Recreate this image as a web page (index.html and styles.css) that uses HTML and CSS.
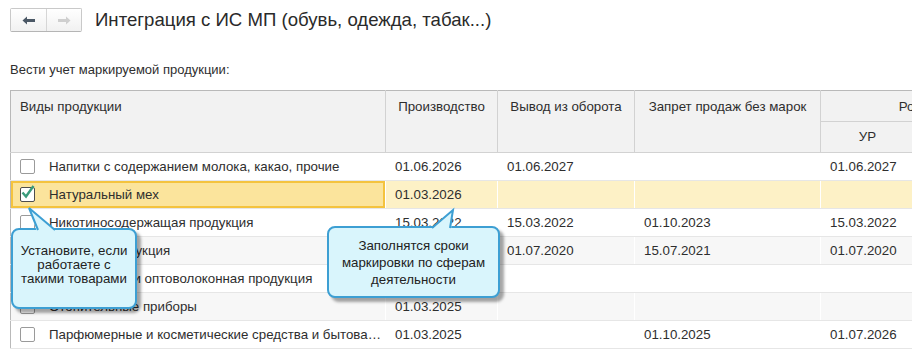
FILE: index.html
```html
<!DOCTYPE html>
<html lang="ru">
<head>
    <meta charset="UTF-8">
    <meta name="viewport" content="width=device-width, initial-scale=1.0">
    <title>Интеграция с ИС МП</title>
    <link rel="stylesheet" href="styles.css">
</head>
<body>
    <div class="toolbar">
        <div class="nav">
            <button class="nav-btn">
                <svg width="14" height="9" viewBox="0 0 14 9"><path d="M0.5 4.5 L5 0.5 L5 3 L13 3 L13 6 L5 6 L5 8.5 Z" fill="#4b5866"/></svg>
            </button>
            <button class="nav-btn" disabled>
                <svg width="14" height="9" viewBox="0 0 14 9"><path d="M13.5 4.5 L9 0.5 L9 3 L1 3 L1 6 L9 6 L9 8.5 Z" fill="#cfcfcf"/></svg>
            </button>
        </div>
        <h1>Интеграция с ИС МП (обувь, одежда, табак...)</h1>
    </div>

    <div class="caption">Вести учет маркируемой продукции:</div>

    <div class="grid-wrap">
        <table class="grid">
            <colgroup>
                <col style="width: 375px">
                <col style="width: 112px">
                <col style="width: 137px">
                <col style="width: 186px">
                <col style="width: 94px">
                <col style="width: 114px">
            </colgroup>
            <thead>
                <tr class="head-top">
                    <th rowspan="2" class="left">Виды продукции</th>
                    <th rowspan="2">Производство</th>
                    <th rowspan="2">Вывод из оборота</th>
                    <th rowspan="2">Запрет продаж без марок</th>
                    <th colspan="2">Розница</th>
                </tr>
                <tr class="head-sub">
                    <th class="sub">УР</th>
                    <th class="sub">ЕАЭС</th>
                </tr>
            </thead>
            <tbody>
                <tr>
                    <td class="name"><span class="check"></span>Напитки с содержанием молока, какао, прочие</td>
                    <td>01.06.2026</td>
                    <td>01.06.2027</td>
                    <td></td>
                    <td>01.06.2027</td>
                    <td></td>
                </tr>
                <tr class="selected">
                    <td class="name"><span class="check checked"><svg width="16" height="16" viewBox="0 0 16 16"><path d="M2.5 7.5 L6 11.5 L13.5 1" fill="none" stroke="#3a9b7b" stroke-width="2.4"/></svg></span>Натуральный мех</td>
                    <td>01.03.2026</td>
                    <td></td>
                    <td></td>
                    <td></td>
                    <td></td>
                </tr>
                <tr>
                    <td class="name"><span class="check"></span>Никотиносодержащая продукция</td>
                    <td>15.03.2022</td>
                    <td>15.03.2022</td>
                    <td>01.10.2023</td>
                    <td>15.03.2022</td>
                    <td></td>
                </tr>
                <tr>
                    <td class="name"><span class="check"></span>Обувная продукция</td>
                    <td>01.07.2020</td>
                    <td>01.07.2020</td>
                    <td>15.07.2021</td>
                    <td>01.07.2020</td>
                    <td></td>
                </tr>
                <tr>
                    <td class="name"><span class="check"></span>Оптоволокно и оптоволоконная продукция</td>
                    <td></td>
                    <td></td>
                    <td></td>
                    <td></td>
                    <td></td>
                </tr>
                <tr>
                    <td class="name"><span class="check"></span>Отопительные приборы</td>
                    <td>01.03.2025</td>
                    <td></td>
                    <td></td>
                    <td></td>
                    <td></td>
                </tr>
                <tr>
                    <td class="name"><span class="check"></span>Парфюмерные и косметические средства и бытовая химия</td>
                    <td>01.03.2025</td>
                    <td></td>
                    <td>01.10.2025</td>
                    <td>01.07.2026</td>
                    <td></td>
                </tr>
            </tbody>
        </table>

        <!-- подсказки поверх таблицы -->
        <div class="callout callout-left">
            <svg class="tail" width="50" height="26" viewBox="0 0 50 26"><polygon points="26,26 18,2 45,26" fill="#d9f5fc"/><polyline points="27,24 18,2 44,24" fill="none" stroke="#3d9fd3" stroke-width="2"/></svg>
            Установите, если<br>работаете с<br>такими товарами
        </div>
        <div class="callout callout-right">
            <svg class="tail" width="140" height="22" viewBox="0 0 140 22"><polygon points="104,22 126,2 124,22" fill="#d9f5fc"/><polyline points="105,20 126,2 123,20" fill="none" stroke="#3d9fd3" stroke-width="2"/></svg>
            Заполнятся сроки<br>маркировки по сферам<br>деятельности
        </div>
    </div>
</body>
</html>
```

FILE: styles.css
```css
body {
    margin: 0;
    font-family: "Liberation Sans", Arial, sans-serif;
    font-size: 13px;
    color: #2e2e2e;
    background: #fff;
    overflow: hidden;
}
.toolbar {
    display: flex;
    align-items: center;
    gap: 13px;
    padding: 8px 10px 0;
}
.nav {
    display: flex;
    border: 1px solid #c9c9c9;
    border-bottom-color: #b5b5b5;
    border-radius: 2px;
}
.nav-btn {
    width: 35px;
    height: 22px;
    padding: 0;
    border: none;
    background: linear-gradient(#ffffff, #f1f1f1);
    display: flex;
    align-items: center;
    justify-content: center;
}
.nav-btn + .nav-btn {
    border-left: 1px solid #d6d6d6;
}
h1 {
    margin: 0;
    font-size: 18.6px;
    font-weight: normal;
    color: #2a2a2a;
}
.caption {
    padding: 30px 10px 0;
    line-height: 16px;
}
.grid-wrap {
    position: relative;
    margin: 12px 0 0 10px;
    width: 902px;
    overflow: hidden;
}
.grid {
    border-collapse: collapse;
    table-layout: fixed;
    width: 1018px;
    font-size: 13.3px;
}
.grid th {
    background: #f2f2f2;
    font-weight: normal;
    text-align: center;
    vertical-align: top;
    padding: 8px 8px 0;
    line-height: 16px;
    border: 1px solid #d2d2d2;
    white-space: nowrap;
}
.grid th.left {
    text-align: left;
    padding-left: 9px;
}
.grid th.sub {
    vertical-align: middle;
    padding-top: 0;
}
.grid thead tr.head-top {
    height: 31px;
}
.grid thead tr.head-sub {
    height: 31px;
}
.grid thead tr:first-child th {
    border-top-color: #b9b9b9;
}
.grid th:first-child,
.grid td:first-child {
    border-left: 1px solid #b9b9b9;
}
.grid tbody tr {
    height: 28px;
}
.grid td {
    padding: 0 9px;
    border-top: 1px solid #e6e6e6;
    border-bottom: 1px solid #e6e6e6;
    border-left: 1px solid #fff;
    white-space: nowrap;
    overflow: hidden;
    text-overflow: ellipsis;
}
.grid tbody tr:nth-child(even) td {
    background: #f7f7f7;
}
.grid tbody tr.selected td {
    background: #fdf1c6;
}
.grid tbody tr.selected td.name {
    background: #fbe49c;
    box-shadow: inset 0 0 0 2px #f4c33e;
}
.grid td.name {
    padding-left: 9px;
    padding-right: 4px;
}
.check {
    display: inline-block;
    position: relative;
    width: 13px;
    height: 13px;
    border: 1px solid #9a9a9a;
    border-radius: 2px;
    background: #fff;
    vertical-align: -3px;
    margin-right: 14px;
}
.check.checked {
    border-color: #4d4d4d;
}
.check svg {
    position: absolute;
    left: -1px;
    top: -3px;
}
.callout {
    position: absolute;
    box-sizing: border-box;
    background: #d9f5fc;
    border: 2px solid #3d9fd3;
    border-radius: 8px;
    box-shadow: 4px 4px 3px rgba(0, 0, 0, 0.35);
    text-align: center;
    color: #222;
    font-size: 13.3px;
    display: flex;
    align-items: center;
    justify-content: center;
}
.callout .tail {
    position: absolute;
    left: -2px;
    overflow: visible;
}
.callout-left {
    left: 1px;
    top: 138px;
    width: 126px;
    height: 81px;
    line-height: 14px;
    padding-bottom: 7px;
}
.callout-left .tail {
    top: -24px;
}
.callout-right {
    left: 317px;
    top: 136px;
    width: 173px;
    height: 72px;
    line-height: 17px;
}
.callout-right .tail {
    top: -20px;
}
```
